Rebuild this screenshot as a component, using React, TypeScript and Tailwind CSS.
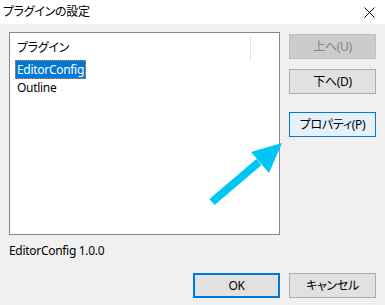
import React from 'react';

const FONT = "font-['Noto_Sans','Noto_Sans_CJK_JP',sans-serif] [font-feature-settings:'palt']";

function Btn({ label, kind = 'normal' }: { label: string; kind?: 'normal' | 'disabled' | 'focus' | 'default' }) {
    const cls = {
        normal: 'bg-[#e1e1e1] border border-[#adadad] text-black',
        disabled: 'bg-[#cccccc] border border-[#bfbfbf] text-[#838383]',
        focus: 'bg-[#e5f1fb] border border-[#0078d7] text-black',
        default: 'bg-[#e1e1e1] border-2 border-[#0078d7] text-black',
    }[kind];
    return (
        <div className={`w-[87px] h-[25px] flex items-center justify-center leading-none ${cls}`}>
            {label}
        </div>
    );
}

export default function App() {
    return (
        <div className={`relative w-[385px] h-[305px] overflow-hidden bg-[#f0f0f0] flex flex-col text-[12px] tracking-[-0.3px] text-black ${FONT}`}>
            {/* Title bar */}
            <div className="h-[24px] bg-white flex items-center justify-between pl-[3px] pr-[10px]">
                <span>プラグインの設定</span>
                <svg width="11" height="11" viewBox="0 0 11 11">
                    <path d="M0.5 0.5 L10.5 10.5 M10.5 0.5 L0.5 10.5" stroke="#000" strokeWidth="1" />
                </svg>
            </div>

            <div className="flex-1 flex flex-col pl-[9px] pr-[9px]">
                {/* List + side buttons */}
                <div className="flex gap-[9px] mt-[8px]">
                    <div className="w-[271px] h-[203px] bg-white border border-[#828790] flex flex-col pl-[5px] pt-[1px]">
                        <div className="h-[26px] flex items-center">
                            <div className="w-[235px] pl-[2px] pt-[2px]">プラグイン</div>
                            <div className="w-px h-[24px] bg-[#e5e5e5] mt-[4px]" />
                        </div>
                        <div className="h-[19px] flex items-center">
                            <div className="h-[19px] px-[1px] flex items-center bg-[#0078d7] text-white border border-dotted border-[#ff8728]">
                                EditorConfig
                            </div>
                        </div>
                        <div className="h-[18px] flex items-center pl-[2px]">Outline</div>
                    </div>

                    <div className="flex flex-col pt-[2px]">
                        <Btn label="上へ(U)" kind="disabled" />
                        <div className="mt-[10px]">
                            <Btn label="下へ(D)" />
                        </div>
                        <div className="mt-[18px]">
                            <Btn label="プロパティ(P)" kind="focus" />
                        </div>
                    </div>
                </div>

                {/* Footer */}
                <div className="mt-[7px] h-[18px] flex items-center">EditorConfig 1.0.0</div>
                <div className="flex justify-end gap-[9px] mt-[13px]">
                    <Btn label="OK" kind="default" />
                    <Btn label="キャンセル" />
                </div>
            </div>

            {/* Annotation arrow */}
            <svg className="absolute inset-0 pointer-events-none" width="385" height="305" viewBox="0 0 385 305">
                <line x1="212" y1="202" x2="259" y2="162" stroke="#00c6f6" strokeWidth="8" />
                <polygon points="282,143 251,152 269,173" fill="#00c6f6" />
            </svg>
        </div>
    );
}
